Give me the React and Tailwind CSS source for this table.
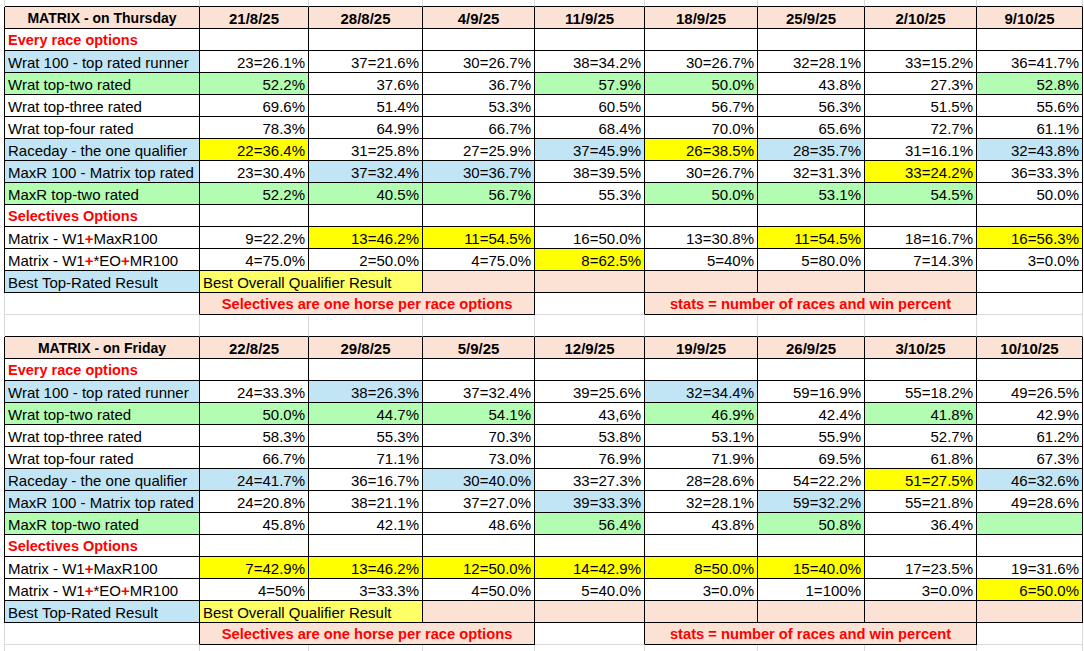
import clsx from "clsx";

// spreadsheet look: two pasted result tables
const GRID = "grid grid-cols-[195px_109px_114px_112px_110px_113px_107px_112px_106px]";

const BG = {
  w: "bg-white",
  b: "bg-[#c1e5f5]",
  g: "bg-[#b3fdb3]",
  y: "bg-[#ffff00]",
  ly: "bg-[#ffff66]",
  p: "bg-[#fbe2d5]",
};

function Cell({ t = "", bg = "w", a = "r", span = 1, r = "k", b = "k", tc = "text-[15px] text-black", h = "h-[22px]" }) {
  return (
    <div
      className={clsx(
        "flex items-end whitespace-nowrap border-r",
        h,
        BG[bg],
        r === "k" ? "border-r-black" : "border-r-[#dadada]",
        b === "k" && "border-b border-b-black",
        b === "g" && "border-b border-b-[#dadada]",
        span === 2 && "col-span-2",
        span === 3 && "col-span-3",
        a === "r" && "justify-end pr-[3px]",
        a === "c" && "justify-center",
        a === "l" && "pl-[3px]"
      )}
    >
      <span className={clsx("leading-[19px]", tc)}>{t}</span>
    </div>
  );
}

function Row({ left = "k", children }) {
  return (
    <div className={clsx("ml-[4px] border-l", GRID, left === "k" ? "border-l-black" : "border-l-[#dadada]")}>
      {children}
    </div>
  );
}

const Plus = () => <span className="font-bold text-[#ff0000]">+</span>;

function val(s) {
  if (s.includes("|")) {
    const [bg, t] = s.split("|");
    return { bg, t };
  }
  return { bg: "w", t: s };
}

function Strip({ h, b }) {
  return (
    <Row left="g">
      {Array.from({ length: 9 }).map((_, i) => (
        <Cell key={i} h={h} r="g" b={b} />
      ))}
    </Row>
  );
}

function Table({ title, dates, rows, sel, lastBest }) {
  const red = "text-[14.5px] font-bold text-[#ff0000]";
  const note = "text-[14.7px] font-bold text-[#ff0000]";
  return (
    <>
      <Row>
        <Cell t={title} bg="p" a="c" tc="text-[14px] font-bold text-black" />
        {dates.map((d) => (
          <Cell key={d} t={d} bg="p" a="c" tc="text-[15px] font-bold text-black" />
        ))}
      </Row>
      <Row>
        <Cell t="Every race options" a="l" tc={red} />
        {dates.map((d) => (
          <Cell key={d} />
        ))}
      </Row>
      {rows.map(([label, lbg, vals]) => (
        <Row key={label}>
          <Cell t={label} bg={lbg} a="l" />
          {vals.map((v, i) => (
            <Cell key={i} {...val(v)} />
          ))}
        </Row>
      ))}
      <Row>
        <Cell t="Selectives Options" a="l" tc={red} />
        {dates.map((d) => (
          <Cell key={d} />
        ))}
      </Row>
      <Row>
        <Cell t={<>Matrix - W1<Plus />MaxR100</>} a="l" />
        {sel[0].map((v, i) => (
          <Cell key={i} {...val(v)} />
        ))}
      </Row>
      <Row>
        <Cell t={<>Matrix - W1<Plus />*EO<Plus />MR100</>} a="l" />
        {sel[1].map((v, i) => (
          <Cell key={i} {...val(v)} />
        ))}
      </Row>
      <Row>
        <Cell t="Best Top-Rated Result" bg="b" a="l" />
        <Cell t="Best Overall Qualifier Result" bg="ly" a="l" span={2} />
        <Cell bg="p" />
        <Cell bg="p" />
        <Cell bg="p" />
        <Cell bg="p" />
        <Cell bg="p" />
        <Cell bg={lastBest} />
      </Row>
      <Row left="g">
        <Cell b="g" />
        <Cell t="Selectives are one horse per race options" bg="p" a="c" span={3} tc={note} />
        <Cell b="g" />
        <Cell t="stats = number of races and win percent" bg="p" a="c" span={3} tc={note} />
        <Cell r="g" b="g" />
      </Row>
    </>
  );
}

const thursday = [
  ["Wrat 100 - top rated runner", "b", ["23=26.1%", "37=21.6%", "30=26.7%", "38=34.2%", "30=26.7%", "32=28.1%", "33=15.2%", "36=41.7%"]],
  ["Wrat top-two rated", "g", ["g|52.2%", "37.6%", "36.7%", "g|57.9%", "g|50.0%", "43.8%", "27.3%", "g|52.8%"]],
  ["Wrat top-three rated", "w", ["69.6%", "51.4%", "53.3%", "60.5%", "56.7%", "56.3%", "51.5%", "55.6%"]],
  ["Wrat top-four rated", "w", ["78.3%", "64.9%", "66.7%", "68.4%", "70.0%", "65.6%", "72.7%", "61.1%"]],
  ["Raceday - the one qualifier", "b", ["y|22=36.4%", "31=25.8%", "27=25.9%", "b|37=45.9%", "y|26=38.5%", "b|28=35.7%", "31=16.1%", "b|32=43.8%"]],
  ["MaxR 100 - Matrix top rated", "b", ["23=30.4%", "b|37=32.4%", "b|30=36.7%", "38=39.5%", "30=26.7%", "32=31.3%", "y|33=24.2%", "36=33.3%"]],
  ["MaxR top-two rated", "g", ["g|52.2%", "g|40.5%", "g|56.7%", "55.3%", "g|50.0%", "g|53.1%", "g|54.5%", "50.0%"]],
];
const thursdaySel = [
  ["9=22.2%", "y|13=46.2%", "y|11=54.5%", "16=50.0%", "13=30.8%", "y|11=54.5%", "18=16.7%", "y|16=56.3%"],
  ["4=75.0%", "2=50.0%", "4=75.0%", "y|8=62.5%", "5=40%", "5=80.0%", "7=14.3%", "3=0.0%"],
];

const friday = [
  ["Wrat 100 - top rated runner", "b", ["24=33.3%", "b|38=26.3%", "37=32.4%", "39=25.6%", "b|32=34.4%", "59=16.9%", "55=18.2%", "49=26.5%"]],
  ["Wrat top-two rated", "g", ["g|50.0%", "g|44.7%", "g|54.1%", "43,6%", "g|46.9%", "42.4%", "g|41.8%", "42.9%"]],
  ["Wrat top-three rated", "w", ["58.3%", "55.3%", "70.3%", "53.8%", "53.1%", "55.9%", "52.7%", "61.2%"]],
  ["Wrat top-four rated", "w", ["66.7%", "71.1%", "73.0%", "76.9%", "71.9%", "69.5%", "61.8%", "67.3%"]],
  ["Raceday - the one qualifier", "b", ["b|24=41.7%", "36=16.7%", "b|30=40.0%", "33=27.3%", "28=28.6%", "54=22.2%", "y|51=27.5%", "b|46=32.6%"]],
  ["MaxR 100 - Matrix top rated", "b", ["24=20.8%", "38=21.1%", "37=27.0%", "b|39=33.3%", "32=28.1%", "b|59=32.2%", "55=21.8%", "49=28.6%"]],
  ["MaxR top-two rated", "g", ["45.8%", "42.1%", "48.6%", "g|56.4%", "43.8%", "g|50.8%", "36.4%", "g|"]],
];
const fridaySel = [
  ["y|7=42.9%", "y|13=46.2%", "y|12=50.0%", "y|14=42.9%", "y|8=50.0%", "y|15=40.0%", "17=23.5%", "19=31.6%"],
  ["4=50%", "3=33.3%", "4=50.0%", "5=40.0%", "3=0.0%", "1=100%", "3=0.0%", "y|6=50.0%"],
];

export default function App() {
  return (
    <div className="w-[1084px] h-[651px] overflow-hidden bg-white font-['Liberation_Sans',Arial,sans-serif]">
      <Strip h="h-[7px]" b="k" />
      <Table
        title="MATRIX - on Thursday"
        dates={["21/8/25", "28/8/25", "4/9/25", "11/9/25", "18/9/25", "25/9/25", "2/10/25", "9/10/25"]}
        rows={thursday}
        sel={thursdaySel}
        lastBest="w"
      />
      <Strip h="h-[22px]" b="k" />
      <Table
        title="MATRIX - on Friday"
        dates={["22/8/25", "29/8/25", "5/9/25", "12/9/25", "19/9/25", "26/9/25", "3/10/25", "10/10/25"]}
        rows={friday}
        sel={fridaySel}
        lastBest="p"
      />
      <Strip h="h-[7px]" b="none" />
    </div>
  );
}
